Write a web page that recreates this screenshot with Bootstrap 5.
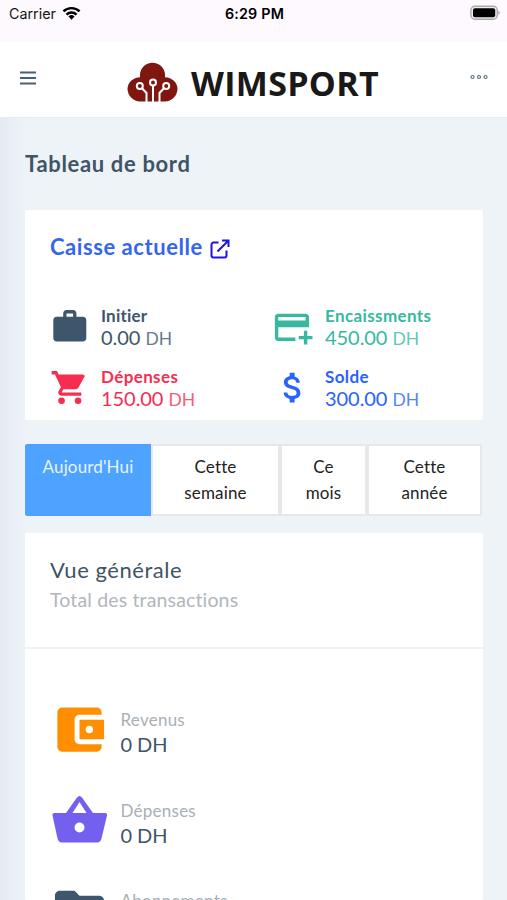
<!DOCTYPE html>
<html lang="fr">
<head>
<meta charset="utf-8">
<meta name="viewport" content="width=device-width, initial-scale=1">
<title>Wimsport</title>
<link href="https://cdn.jsdelivr.net/npm/bootstrap@5.3.0/dist/css/bootstrap.min.css" rel="stylesheet">
<style>
body{font-family:Lato,"Open Sans",sans-serif;background:#eef3f8;color:#3f5467;height:900px;overflow:hidden}
svg{display:block;flex:none}
.status{height:42px;background:#fdf9fe;font-family:Inter,sans-serif;color:#151515;font-size:14.3px;line-height:28px;padding:0 7px 0 9px}
.status .side{width:160px}
.status .clock{font-weight:600;letter-spacing:.2px;color:#000}
.wifi{margin:6px 0 0 2px}
.topbar{height:76px;padding:0 19px 0 20px;border-bottom:1px solid #e6ebee}
.brand{font:700 34px/40px "Open Sans",sans-serif;color:#1a1818;letter-spacing:.3px;margin-left:13px;padding-top:2px}
.logo{padding-top:5px}
.bars{margin-top:-3px}
.dots{margin-top:-5px}
.page{padding:0 24px 0 25px;background:linear-gradient(90deg,#e4eaef 0,#e9eff6 12px,#eef3f8 26px);height:782px}
.title{font-size:22px;line-height:30px;font-weight:700;padding-top:31px;margin-bottom:31px;letter-spacing:.66px}
.panel{background:#fff;border:0;border-radius:2px;color:inherit}
.cash{height:210px;padding:22px 25px 0;margin-bottom:24px}
.cash-title{font-size:22px;line-height:30px;font-weight:700;color:#3366ec;letter-spacing:.55px}
.launch{margin:7px 0 0 7px}
.cash-grid{display:grid;grid-template-columns:224px 1fr;grid-auto-rows:61px;padding-top:44px}
.stat-name{font-size:17px;line-height:20px;font-weight:700;letter-spacing:.38px}
.stat-name.tight{letter-spacing:.2px}
.stat-val{font-size:20px;line-height:22px;letter-spacing:-.05px}
.stat-val small{font-size:17.5px;font-weight:400;opacity:.78;margin-left:0}
.stat-icon{width:51px}
.navy{color:#3d566c}.green{color:#36b9a0}.red{color:#f62d51}.blue{color:#2962ff}
.tabs{height:71px;margin-bottom:18px;width:457px;grid-template-columns:126px 129px 87px 115px}
.tabs .btn{display:flex;justify-content:center;align-items:flex-start;font-size:17px;line-height:26px;border:2px solid #e6e8ea;border-radius:0;background:#fff;color:#222;padding:8px 4px;letter-spacing:.15px}
.tabs .btn.active{background:#4da3ff;border-color:#4da3ff;color:#e6f3ff;border-radius:2px 0 0 2px}
.overview{height:367px;overflow:hidden}
.ov-head{flex:none;height:116px;padding:21px 25px 0;border-bottom:2px solid #edf1f5}
.ov-title{font-size:22px;line-height:31px;letter-spacing:.55px}
.ov-sub{font-size:19.5px;line-height:29px;color:#b1b6bb;letter-spacing:.15px}
.ov-list{padding-top:51px}
.ov-row{height:90.5px;padding-left:24.5px}
.ov-icon{width:71px}
.ov-name{font-size:17px;line-height:24px;color:#a9afb5;letter-spacing:.25px}
.ov-val{font-size:20px;line-height:24px;color:#3f5467;letter-spacing:-.1px}
</style>
</head>
<body>
<div class="status d-flex justify-content-between">
  <div class="side d-flex gap-1"><span>Carrier</span>
    <svg width="19" height="14" viewBox="0 0 20 14" class="wifi"><g fill="none" stroke="#000" stroke-width="2.6"><path d="M1.500 5.400a12 12 0 0 1 17 0"/><path d="M4.700 8.700a7.500 7.500 0 0 1 10.600 0"/></g><path d="M10 14l-3.200-3.400a4.600 4.600 0 0 1 6.400 0z"/></svg>
  </div>
  <span class="clock">6:29 PM</span>
  <div class="side d-flex justify-content-end">
    <svg width="30" height="16" viewBox="0 0 30 16" class="mt-1"><rect x=".9" y="2.200" width="26.400" height="13" rx="4" fill="#eee" stroke="#aaa" stroke-width="1.400"/><rect x="3" y="4.200" width="22.200" height="9" rx="2" fill="#000"/><path d="M28.300 6.800v4q1.600-.8 1.600-2t-1.600-2" fill="#aaa"/></svg>
  </div>
</div>
<nav class="topbar bg-white d-flex align-items-center justify-content-between">
  <svg class="bars" width="16" height="14" viewBox="0 0 16 14"><path d="M0 1.500h16M0 7h16M0 12.500h16" stroke="#4a6073" stroke-width="2"/></svg>
  <div class="logo d-flex align-items-center">
    <svg width="51" height="40" viewBox="0 0 51 40"><path d="M13 39.500A13 13 0 0 1 .5 27C.5 20.500 6 15.500 13 15.200v-2a12.500 12.500 0 0 1 25 0v2C45 15.500 50.500 20.500 50.500 27A13 13 0 0 1 38 39.500z" fill="#7f1710"/><g fill="none" stroke="#fff" stroke-width="2"><circle cx="12.800" cy="24" r="3"/><circle cx="26" cy="20.500" r="3"/><circle cx="39.200" cy="24" r="3"/><path d="M15 26.200L19.500 31v9M26 23.500v17M37 26.200L32.500 31v9"/></g></svg>
    <span class="brand">WIMSPORT</span>
  </div>
  <svg class="dots" width="18" height="6" viewBox="0 0 18 6"><g fill="none" stroke="#5c6e7c" stroke-width="1.200"><circle cx="2.500" cy="3" r="1.500"/><circle cx="9" cy="3" r="1.500"/><circle cx="15.500" cy="3" r="1.500"/></g></svg>
</nav>
<main class="page">
  <h1 class="title">Tableau de bord</h1>
  <section class="card panel cash">
    <div class="d-flex align-items-start"><span class="cash-title">Caisse actuelle</span>
      <svg width="20" height="20" viewBox="0 0 20 20" class="launch" fill="none" stroke="#1d13e4" stroke-width="2"><path d="M8.500 3.500H3.500a2 2 0 0 0-2 2v11a2 2 0 0 0 2 2h11a2 2 0 0 0 2-2v-5M12 1.500h6.500V8M18 2L7.500 12.500"/></svg>
    </div>
    <div class="cash-grid">
      <div class="d-flex navy"><div class="stat-icon"><svg width="39.600" height="39.600" viewBox="0 -.5 24 24" fill="currentColor"><path d="M20 6h-4V4c0-1.110-.89-2-2-2h-4c-1.110 0-2 .89-2 2v2H4c-1.110 0-2 .89-2 2v11c0 1.110.89 2 2 2h16c1.110 0 2-.89 2-2V8c0-1.110-.89-2-2-2zm-6 0h-4V4h4z"/></svg></div>
        <div><div class="stat-name tight">Initier</div><div class="stat-val">0.00 <small>DH</small></div></div></div>
      <div class="d-flex green"><div class="stat-icon"><svg width="41" height="41" viewBox="1.500 -.5 24 24" fill="currentColor"><path d="M20 4H4c-1.110 0-2 .89-2 2v12c0 1.110.89 2 2 2h10v-2H4v-6h18V6c0-1.110-.89-2-2-2zm0 4H4V6h16zm4 9v2h-3v3h-2v-3h-3v-2h3v-3h2v3h3z"/></svg></div>
        <div><div class="stat-name">Encaissments</div><div class="stat-val">450.00 <small>DH</small></div></div></div>
      <div class="d-flex red"><div class="stat-icon"><svg width="39.600" height="39.600" viewBox="0 -.5 24 24" fill="currentColor"><circle cx="7" cy="20" r="2"/><circle cx="17" cy="20" r="2"/><path d="M1 2v2h2l3.600 7.590-1.350 2.450c-.16.28-.25.61-.25.96 0 1.100.9 2 2 2h12v-2H7.420c-.14 0-.25-.11-.25-.25l.03-.12.9-1.630h7.450c.75 0 1.410-.41 1.750-1.030l3.580-6.490c.08-.14.12-.31.12-.48 0-.55-.45-1-1-1H5.210l-.94-2z"/></svg></div>
        <div><div class="stat-name">Dépenses</div><div class="stat-val">150.00 <small>DH</small></div></div></div>
      <div class="d-flex blue"><div class="stat-icon"><svg width="39.600" height="39.600" viewBox=".5 -.5 24 24" fill="currentColor"><path d="M11.800 10.900c-2.270-.59-3-1.200-3-2.150 0-1.090 1.010-1.850 2.700-1.850 1.780 0 2.440.85 2.500 2.100h2.210c-.07-1.720-1.120-3.300-3.210-3.810V3h-3v2.160c-1.940.42-3.500 1.680-3.500 3.610 0 2.310 1.910 3.460 4.700 4.130 2.500.6 3 1.480 3 2.410 0 .69-.49 1.790-2.700 1.790-2.060 0-2.870-.92-2.980-2.100h-2.200c.12 2.190 1.760 3.420 3.680 3.830V21h3v-2.150c1.950-.37 3.500-1.500 3.500-3.550 0-2.840-2.430-3.810-4.700-4.400z"/></svg></div>
        <div><div class="stat-name">Solde</div><div class="stat-val">300.00 <small>DH</small></div></div></div>
    </div>
  </section>
  <div class="tabs d-grid">
    <button class="btn active">Aujourd'Hui</button>
    <button class="btn">Cette<br>semaine</button>
    <button class="btn">Ce<br>mois</button>
    <button class="btn">Cette<br>année</button>
  </div>
  <section class="card panel overview">
    <div class="ov-head"><div class="ov-title">Vue générale</div><div class="ov-sub">Total des transactions</div></div>
    <div class="ov-list">
      <div class="ov-row d-flex"><div class="ov-icon"><svg width="59" height="59" viewBox="0 0 24 24" fill="#ff8f00"><path fill-rule="evenodd" d="M21 18v1c0 1.100-.9 2-2 2H5c-1.110 0-2-.9-2-2V5c0-1.100.89-2 2-2h14c1.100 0 2 .9 2 2v1h-9c-1.110 0-2 .9-2 2v8c0 1.100.89 2 2 2zm-9-2h10V8H12zm4-2.500a1.500 1.500 0 1 1 0-3 1.500 1.500 0 0 1 0 3z"/></svg></div>
        <div class="pt-2"><div class="ov-name">Revenus</div><div class="ov-val">0 DH</div></div></div>
      <div class="ov-row d-flex"><div class="ov-icon"><svg width="59" height="59" viewBox="0 0 59 59"><path fill="#7460ee" fill-rule="evenodd" d="M27 6.500q2.500-3 5 0L43 22h12q2.500 0 2 2.500l-5.500 23q-1 4-4.500 4H12q-3.500 0-4.500-4L2.500 24.500Q2 22 4.500 22H16zM29.500 11L22.500 22h14zM29.500 31.500a5 5 0 1 0 0 10 5 5 0 0 0 0-10z"/></svg></div>
        <div class="pt-2"><div class="ov-name">Dépenses</div><div class="ov-val">0 DH</div></div></div>
      <div class="ov-row d-flex"><div class="ov-icon"><svg width="59" height="59" viewBox="0 0 24 24" fill="#3d566c"><path d="M10 4H4c-1.100 0-2 .9-2 2v12c0 1.100.9 2 2 2h16c1.100 0 2-.9 2-2V8c0-1.100-.9-2-2-2h-8z"/></svg></div>
        <div class="pt-2"><div class="ov-name">Abonnements</div></div></div>
    </div>
  </section>
</main>
<script src="https://cdn.jsdelivr.net/npm/bootstrap@5.3.0/dist/js/bootstrap.bundle.min.js"></script>
</body>
</html>
